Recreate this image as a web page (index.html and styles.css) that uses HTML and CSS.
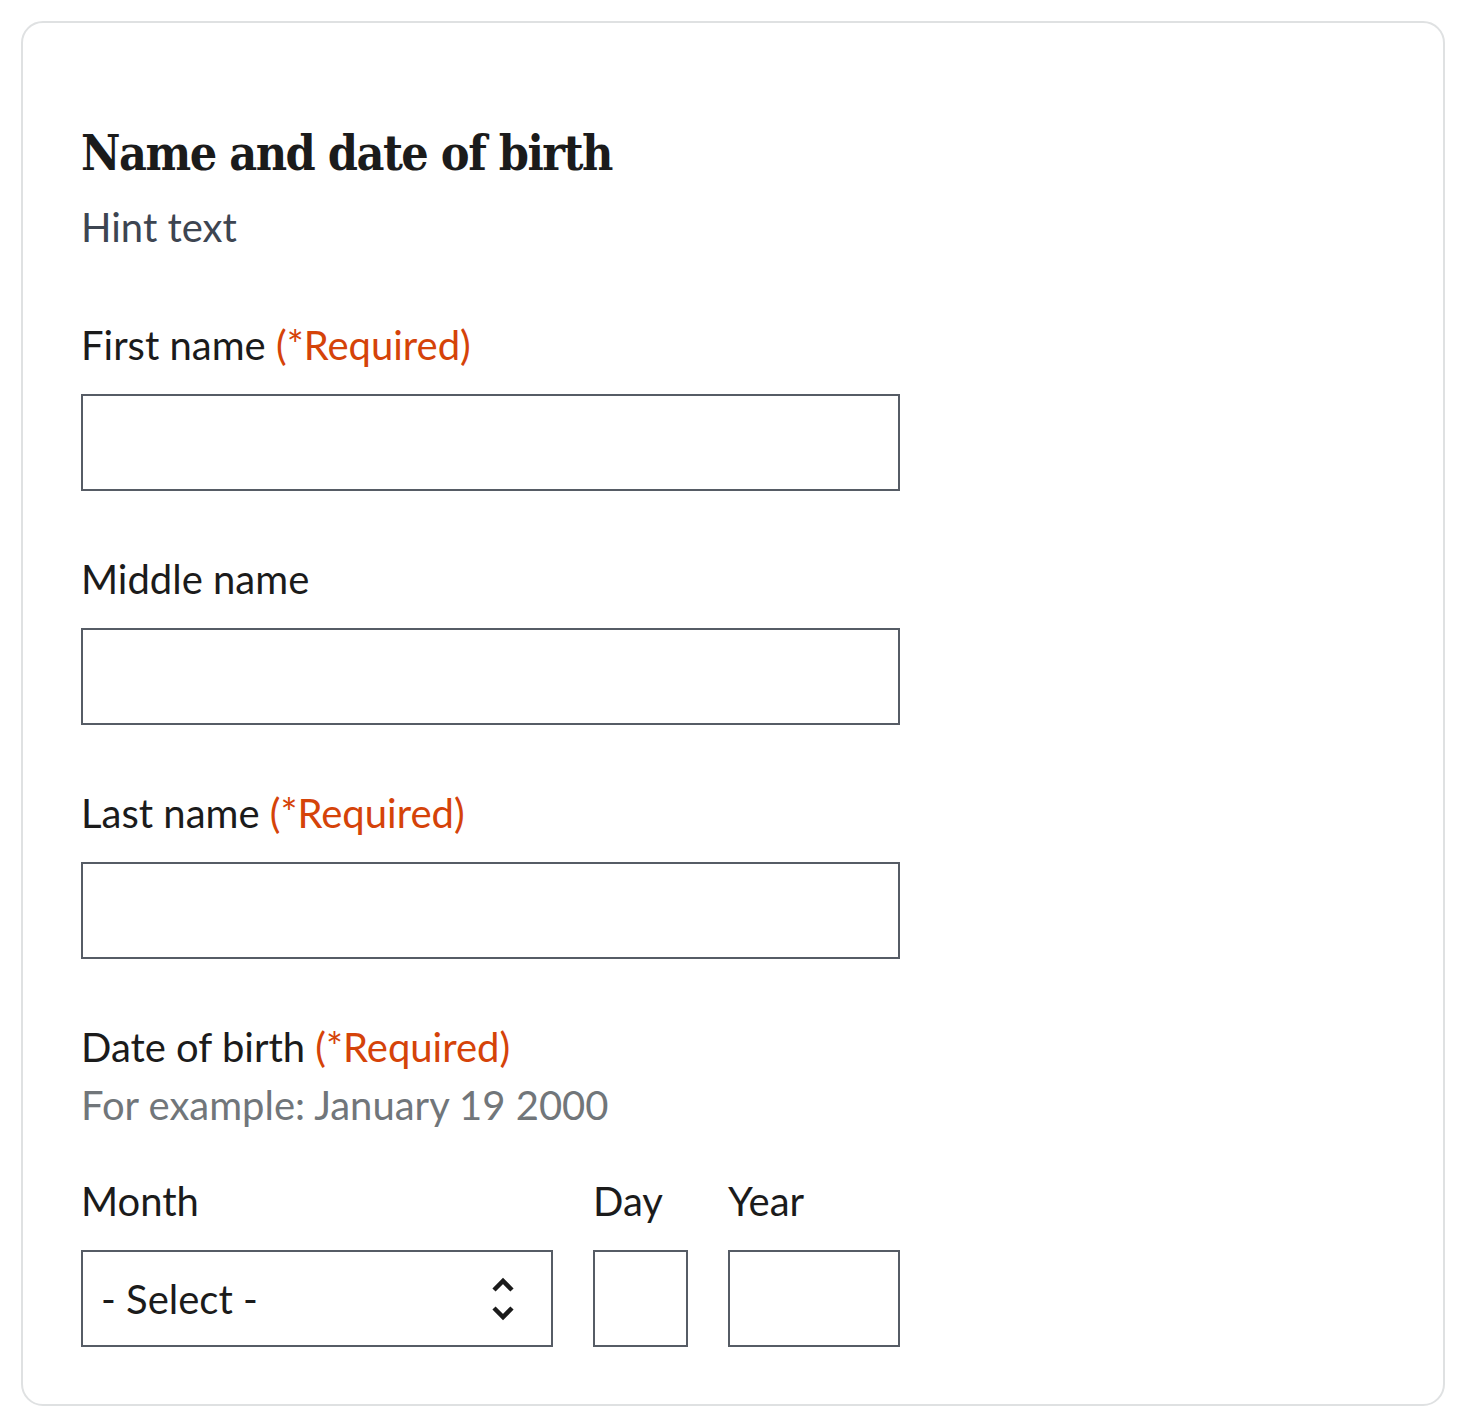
FILE: index.html
```html
<!DOCTYPE html>
<html lang="en">
<head>
<meta charset="utf-8">
<title>Name and date of birth</title>
<link rel="stylesheet" href="styles.css">
</head>
<body>
<form class="card">
  <h1 class="title">Name and date of birth</h1>
  <p class="hint">Hint text</p>

  <label class="label first" for="first">First name <span class="req">(*Required)</span></label>
  <input class="input" id="first" type="text">

  <label class="label" for="middle">Middle name</label>
  <input class="input" id="middle" type="text">

  <label class="label" for="last">Last name <span class="req">(*Required)</span></label>
  <input class="input" id="last" type="text">

  <div class="label">Date of birth <span class="req">(*Required)</span></div>
  <div class="example">For example: January 19 2000</div>

  <div class="date-row">
    <div class="date-field month">
      <label class="sublabel" for="month">Month</label>
      <div class="select" id="month">
        <span class="select-text">- Select -</span>
        <svg class="chev" width="24" height="44" viewBox="0 0 24 44" aria-hidden="true">
          <path d="M3 13 L12 4 L21 13" fill="none" stroke="#1b1b1b" stroke-width="4.5"/>
          <path d="M3 31 L12 40 L21 31" fill="none" stroke="#1b1b1b" stroke-width="4.5"/>
        </svg>
      </div>
    </div>
    <div class="date-field day">
      <label class="sublabel" for="day">Day</label>
      <input class="input small" id="day" type="text">
    </div>
    <div class="date-field year">
      <label class="sublabel" for="year">Year</label>
      <input class="input small" id="year" type="text">
    </div>
  </div>
</form>
</body>
</html>
```

FILE: styles.css
```css
* { box-sizing: border-box; }
html, body { margin: 0; padding: 0; background: #ffffff; }
body { font-family: "Lato", "Noto Sans", sans-serif; color: #1b1b1b; }

.card {
  display: flex;
  flex-direction: column;
  align-items: flex-start;
  width: 1424px;
  height: 1385px;
  margin: 21px 0 0 21px;
  padding: 0 0 0 58px;
  border: 2px solid #dfe1e2;
  border-radius: 22px;
}

.title {
  margin: 95px 0 0 0;
  font-family: "DejaVu Serif Condensed", "DejaVu Serif", serif;
  font-stretch: condensed;
  font-weight: 700;
  font-size: 48px;
  line-height: 70px;
  letter-spacing: -1.5px;
  color: #1b1b1b;
}

.hint {
  margin: 15px 0 0 0;
  font-size: 40px;
  line-height: 48px;
  color: #3d4551;
}

.label {
  display: block;
  font-size: 40px;
  line-height: 48px;
  color: #1b1b1b;
  margin-top: 64px;
}
.label.first { margin-top: 70px; }

.req { color: #d54309; }

.input {
  display: block;
  width: 819px;
  height: 97px;
  margin: 25px 0 0 0;
  border: 2px solid #565c65;
  border-radius: 0;
  background: #fff;
  font: inherit;
}

.example {
  font-size: 40px;
  line-height: 48px;
  color: #71767a;
  margin-top: 10px;
}

.date-row {
  display: flex;
  gap: 40px;
  margin-top: 48px;
}
.date-field { display: flex; flex-direction: column; }
.sublabel {
  font-size: 40px;
  line-height: 48px;
  color: #1b1b1b;
}
.month { width: 472px; }
.day { width: 95px; }
.year { width: 172px; }

.select {
  display: flex;
  align-items: center;
  justify-content: space-between;
  width: 472px;
  height: 97px;
  margin-top: 25px;
  padding: 0 36px 0 18px;
  border: 2px solid #565c65;
  background: #fff;
}
.select-text { font-size: 40px; line-height: 48px; color: #1b1b1b; }
.chev { display: block; }

.input.small { width: 100%; }
```
